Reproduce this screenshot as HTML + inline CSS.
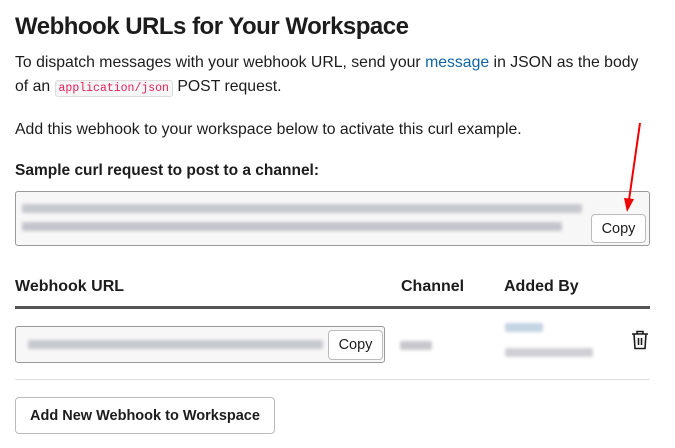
<!DOCTYPE html>
<html><head><style>
body{margin:0;background:#fff;font-family:"Liberation Sans",sans-serif;color:#1d1c1d;width:675px;height:448px;overflow:hidden;position:relative}
.a{position:absolute;white-space:nowrap}
h1{position:absolute;left:15px;top:13px;margin:0;font-size:24px;font-weight:bold;letter-spacing:-0.5px}
.p{font-size:15.8px;color:#1d1c1d}
code{font-family:"Liberation Mono",monospace;font-size:11.5px;color:#e01e5a;background:#f6f6f6;border:1px solid #ddd;border-radius:3px;padding:1px 3px}
.btn{position:absolute;background:#fff;border:1px solid #bbb;border-radius:4px;font-size:14.5px;display:flex;align-items:center;justify-content:center;font-weight:bold;color:#1d1c1d}
.blur{position:absolute;height:9px;border-radius:2px;filter:blur(1.5px)}
</style></head><body>
<h1>Webhook URLs for Your Workspace</h1>
<div class="a p" style="left:15px;top:54px">To dispatch messages with your webhook URL, send your <span style="color:#1264a3">message</span> in JSON as the body</div>
<div class="a p" style="left:15px;top:78px">of an <code>application/json</code> POST request.</div>
<div class="a p" style="left:15px;top:121px">Add this webhook to your workspace below to activate this curl example.</div>
<div class="a p" style="left:15px;top:162px;font-weight:bold;font-size:15.5px">Sample curl request to post to a channel:</div>
<div class="a" style="left:15px;top:191px;width:633px;height:53px;background:#f7f7f7;border:1px solid #999;border-radius:3px"></div>
<div class="blur" style="left:22px;top:204px;width:560px;background:#c8c8d0"></div>
<div class="blur" style="left:22px;top:222px;width:540px;background:#c4c4cc"></div>
<div class="btn" style="left:591px;top:214px;width:53px;height:27px;font-weight:normal">Copy</div>
<svg class="a" style="left:0;top:0" width="675" height="448"><line x1="640" y1="123" x2="629" y2="200" stroke="#e00" stroke-width="2"/><polygon points="624,198 634,199 627,212" fill="#e00"/></svg>
<div class="a p" style="left:15px;top:278px;font-weight:bold;font-size:16px">Webhook URL</div>
<div class="a p" style="left:401px;top:278px;font-weight:bold;font-size:16px">Channel</div>
<div class="a p" style="left:504px;top:278px;font-weight:bold;font-size:16px">Added By</div>
<div class="a" style="left:15px;top:306px;width:635px;height:3px;background:#555"></div>
<div class="a" style="left:15px;top:326px;width:368px;height:35px;background:#f7f7f7;border:1px solid #999;border-radius:3px"></div>
<div class="blur" style="left:28px;top:340px;width:295px;background:#c8c8d0"></div>
<div class="btn" style="left:328px;top:330px;width:53px;height:28px;font-weight:normal">Copy</div>
<div class="blur" style="left:400px;top:341px;width:32px;background:#c8c8cc"></div>
<div class="blur" style="left:505px;top:323px;width:38px;background:#c4d4e4"></div>
<div class="blur" style="left:505px;top:348px;width:88px;background:#d0d0d4"></div>
<svg class="a" style="left:631px;top:330px" width="18" height="20" viewBox="0 0 18 20" fill="none" stroke="#1d1c1d" stroke-width="1.6"><path d="M1 4h16M6 4V1.5h6V4M3 4l1 14.5h10L15 4M7.5 8v7M10.5 8v7"/></svg>
<div class="a" style="left:15px;top:379px;width:635px;height:1px;background:#ddd"></div>
<div class="btn" style="left:15px;top:397px;width:258px;height:35px;font-size:14.5px">Add New Webhook to Workspace</div>
</body></html>
